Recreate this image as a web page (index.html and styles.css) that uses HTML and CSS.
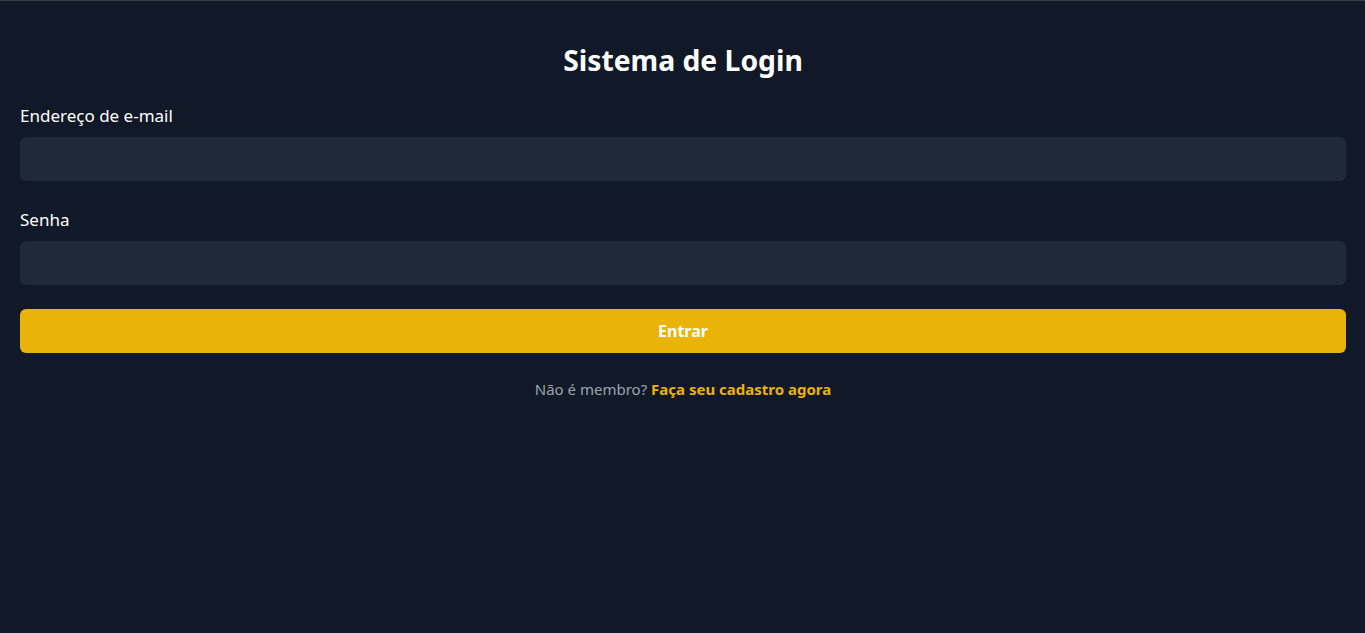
FILE: index.html
```html
<!DOCTYPE html>
<html lang="pt-BR">
<head>
<meta charset="utf-8">
<title>Sistema de Login</title>
<link rel="stylesheet" href="styles.css">
</head>
<body>
<main class="page">
  <h1 class="title">Sistema de Login</h1>
  <form class="form">
    <div class="field">
      <label class="label" for="email">Endereço de e-mail</label>
      <input class="input" id="email" type="email">
    </div>
    <div class="field">
      <label class="label" for="senha">Senha</label>
      <input class="input" id="senha" type="password">
    </div>
    <button class="button" type="button">Entrar</button>
  </form>
  <p class="footer">Não é membro? <a class="link" href="#">Faça seu cadastro agora</a></p>
</main>
</body>
</html>
```
FILE: styles.css
```css
html, body {
  margin: 0;
  padding: 0;
  background: #111827;
  min-height: 100%;
}
body {
  border-top: 1px solid #3a3d42;
  font-family: "Noto Sans", "Open Sans", sans-serif;
  color: #ffffff;
  height: 632px;
}
.page {
  display: flex;
  flex-direction: column;
  padding: 41px 19px 0 20px;
}
.title {
  margin: 0;
  text-align: center;
  font-size: 28.3px;
  line-height: 36px;
  font-weight: 700;
  color: #ffffff;
}
.form {
  display: flex;
  flex-direction: column;
  gap: 24px;
  margin-top: 26px;
}
.field {
  display: flex;
  flex-direction: column;
  gap: 9px;
}
.field + .field {
  margin-top: 3px;
}
.label {
  font-size: 17px;
  line-height: 24px;
  color: #ffffff;
}
.input {
  height: 44px;
  border: none;
  border-radius: 6px;
  background: #1f2937;
  color: #ffffff;
  padding: 0 12px;
  box-sizing: border-box;
  outline: none;
  font: inherit;
}
.button {
  height: 44px;
  border: none;
  border-radius: 6px;
  background: #eab308;
  color: #ffffff;
  font-family: inherit;
  font-size: 16px;
  font-weight: 700;
  cursor: pointer;
}
.footer {
  margin: 26px 0 0;
  text-align: center;
  font-size: 15px;
  line-height: 20px;
  color: #9ca3af;
}
.link {
  color: #eab308;
  font-weight: 700;
  text-decoration: none;
}
```
